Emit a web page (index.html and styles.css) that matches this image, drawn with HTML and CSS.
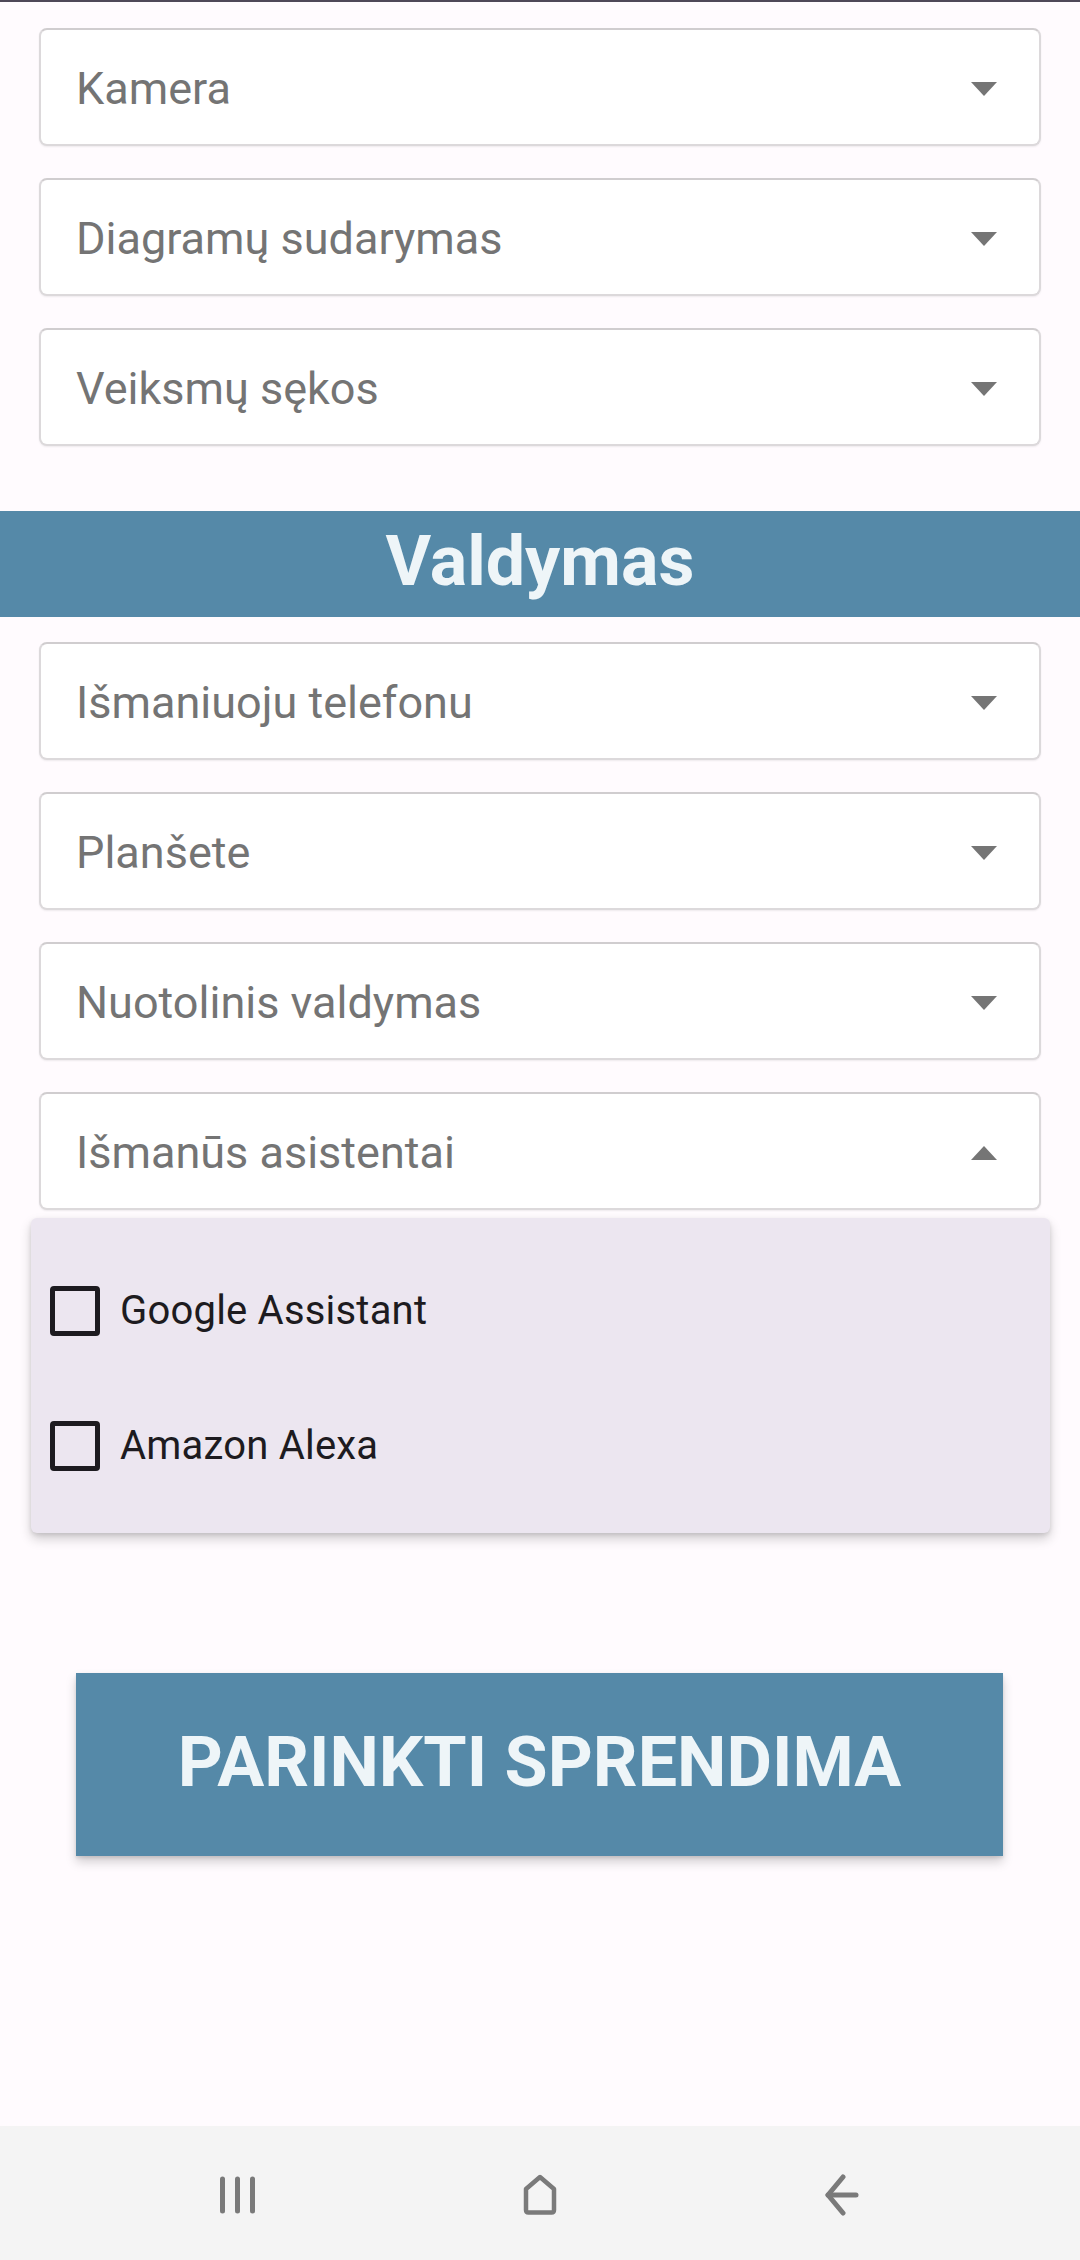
FILE: index.html
```html
<!DOCTYPE html>
<html lang="lt">
<head>
<meta charset="utf-8">
<title>Valdymas</title>
<link rel="stylesheet" href="styles.css">
</head>
<body>
<div class="screen">
  <div class="topline"></div>
  <main class="content">
    <section class="group group-first">
      <div class="select"><span class="label">Kamera</span><span class="caret down"></span></div>
      <div class="select"><span class="label">Diagramų sudarymas</span><span class="caret down"></span></div>
      <div class="select"><span class="label">Veiksmų sękos</span><span class="caret down"></span></div>
    </section>

    <h2 class="band">Valdymas</h2>

    <section class="group group-second">
      <div class="select"><span class="label">Išmaniuoju telefonu</span><span class="caret down"></span></div>
      <div class="select"><span class="label">Planšete</span><span class="caret down"></span></div>
      <div class="select"><span class="label">Nuotolinis valdymas</span><span class="caret down"></span></div>
      <div class="select-wrap">
        <div class="select open"><span class="label">Išmanūs asistentai</span><span class="caret up"></span></div>
        <div class="menu">
          <label class="option"><span class="box"></span><span class="opt-text">Google Assistant</span></label>
          <label class="option"><span class="box"></span><span class="opt-text">Amazon Alexa</span></label>
        </div>
      </div>
    </section>

    <div class="action">
      <button class="primary" type="button">PARINKTI SPRENDIMA</button>
    </div>
  </main>

  <nav class="navbar">
    <div class="nav-slot">
      <svg width="40" height="40" viewBox="0 0 40 40" aria-hidden="true">
        <g stroke="#7a7a7a" stroke-width="5" stroke-linecap="round">
          <line x1="5.5" y1="4" x2="5.5" y2="36"/>
          <line x1="20.5" y1="4" x2="20.5" y2="36"/>
          <line x1="35.5" y1="4" x2="35.5" y2="36"/>
        </g>
      </svg>
    </div>
    <div class="nav-slot">
      <svg width="40" height="42" viewBox="0 0 40 42" aria-hidden="true">
        <path d="M6 15 L20 3 L34 15 L34 36 Q34 38.5 31.5 38.5 L8.5 38.5 Q6 38.5 6 36 Z" fill="none" stroke="#7a7a7a" stroke-width="4.5" stroke-linejoin="round"/>
      </svg>
    </div>
    <div class="nav-slot">
      <svg width="40" height="42" viewBox="0 0 40 42" aria-hidden="true">
        <g fill="none" stroke="#7a7a7a" stroke-width="5" stroke-linecap="round" stroke-linejoin="round">
          <polyline points="20,3 5,21 20,39"/>
          <line x1="5" y1="21" x2="33" y2="21"/>
        </g>
      </svg>
    </div>
  </nav>
</div>
</body>
</html>
```

FILE: styles.css
```css
* {
  box-sizing: border-box;
}

html, body {
  margin: 0;
  padding: 0;
}

body {
  background: #fffbfe;
  font-family: Roboto, "Noto Sans", "Liberation Sans", sans-serif;
}

.screen {
  width: 1080px;
  height: 2260px;
  display: flex;
  flex-direction: column;
  overflow: hidden;
}

.topline {
  height: 2px;
  background: #4f4858;
  flex: none;
}

.content {
  flex: 1;
  display: flex;
  flex-direction: column;
}

.group {
  display: flex;
  flex-direction: column;
  gap: 32px;
  padding: 0 39px;
}

.group-first {
  margin-top: 26px;
}

.group-second {
  margin-top: 25px;
}

.select {
  height: 118px;
  background: #ffffff;
  border: 2px solid #dcd9db;
  border-top-color: #d0cdcf;
  border-radius: 8px;
  box-shadow: 0 1px 2px rgba(0, 0, 0, 0.07);
  display: flex;
  align-items: center;
  justify-content: space-between;
  padding: 0 42px 0 35px;
}

.label {
  font-size: 45px;
  color: #747474;
  line-height: 1;
  padding-top: 2px;
}

.caret {
  width: 0;
  height: 0;
  border-left: 13.5px solid transparent;
  border-right: 13.5px solid transparent;
}

.caret.down {
  border-top: 14px solid #757575;
  margin-top: 4px;
}

.caret.up {
  border-bottom: 14px solid #757575;
  margin-top: 4px;
}

.band {
  margin: 65px 0 0 0;
  height: 106px;
  background: #5589a8;
  color: #eef5f8;
  font-size: 70px;
  font-weight: 700;
  display: flex;
  align-items: center;
  justify-content: center;
  line-height: 1;
  padding-bottom: 6px;
}

.select-wrap {
  position: relative;
}

.menu {
  position: absolute;
  top: 126px;
  left: -8px;
  right: -9px;
  background: #ece6f0;
  border-radius: 6px;
  padding: 25px 0 20px 0;
  box-shadow: 0 6px 12px rgba(0, 0, 0, 0.18), 0 2px 4px rgba(0, 0, 0, 0.10);
  display: flex;
  flex-direction: column;
  z-index: 2;
}

.option {
  height: 135px;
  display: flex;
  align-items: center;
  padding-left: 19px;
  gap: 20px;
}

.box {
  width: 50px;
  height: 50px;
  border: 5px solid #1d1b20;
  border-radius: 4px;
  flex: none;
}

.opt-text {
  font-size: 40px;
  color: #1d1b20;
  line-height: 1;
  letter-spacing: 0.2px;
}

.action {
  display: flex;
  justify-content: center;
  margin-top: 463px;
}

.primary {
  width: 927px;
  height: 183px;
  margin-left: -1px;
  border: none;
  border-radius: 0;
  background: #5589a8;
  color: #eef5f8;
  font-family: Roboto, "Noto Sans", "Liberation Sans", sans-serif;
  font-size: 70px;
  font-weight: 700;
  line-height: 1;
  box-shadow: 0 6px 10px rgba(0, 0, 0, 0.18), 0 2px 3px rgba(0, 0, 0, 0.10);
  padding: 0 0 6px 0;
}

.navbar {
  flex: none;
  height: 134px;
  background: #f4f4f4;
  display: flex;
  justify-content: center;
  align-items: center;
  padding-top: 4px;
}

.nav-slot {
  width: 303px;
  display: flex;
  justify-content: center;
  align-items: center;
}
```
